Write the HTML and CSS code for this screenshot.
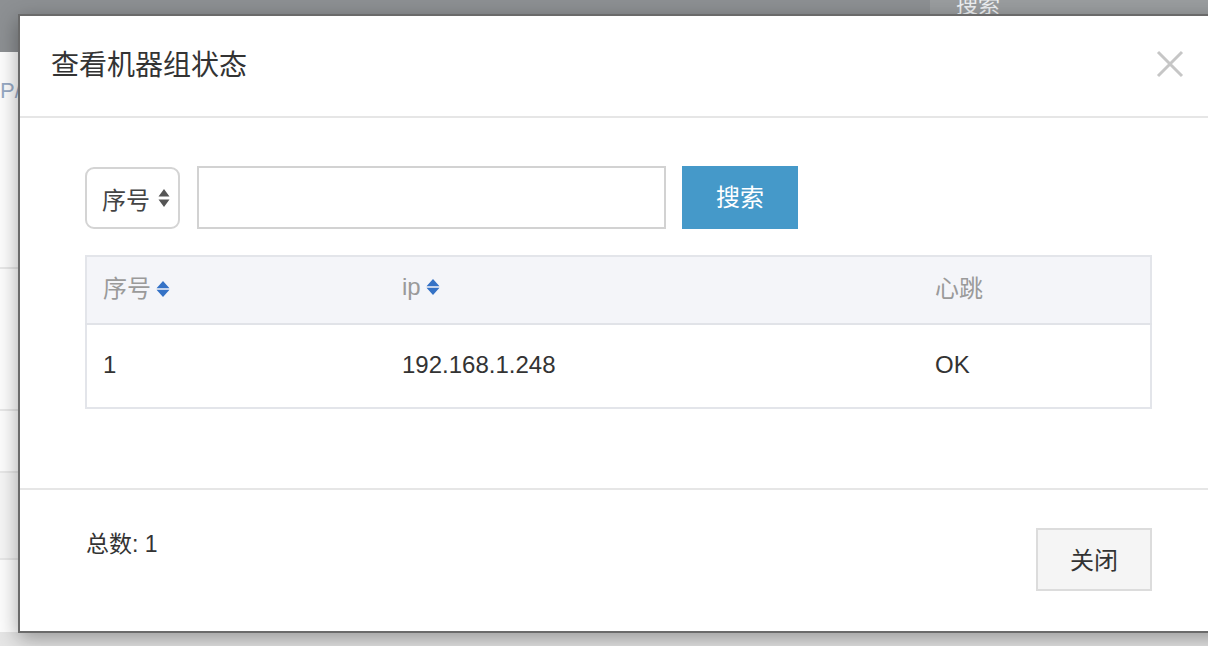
FILE: index.html
```html
<!DOCTYPE html>
<html lang="zh">
<head>
<meta charset="utf-8">
<title>查看机器组状态</title>
<link rel="stylesheet" href="styles.css">
</head>
<body>
<div class="page">
  <div class="topbar">
    <div class="topbar-search">搜索</div>
  </div>
  <div class="page-content">
    <div class="page-link">IP/</div>
    <div class="page-row r1"></div>
    <div class="page-row r2"></div>
    <div class="page-row r3"></div>
    <div class="page-row r4"></div>
  </div>
  <div class="page-bottom"></div>
</div>

<div class="modal">
  <div class="modal-header">
    <h4 class="modal-title">查看机器组状态</h4>
    <button class="modal-close" aria-label="close">
      <svg width="28" height="28" viewBox="0 0 28 28"><path d="M2 2 L26 26 M26 2 L2 26" stroke="#c6c6c6" stroke-width="3" fill="none"/></svg>
    </button>
  </div>
  <div class="modal-body">
    <div class="search-bar">
      <div class="select">
        <span>序号</span>
        <svg class="select-arrow" width="12" height="18" viewBox="0 0 12 18"><path d="M6 0 L11.5 7.5 H0.5 Z M6 18 L11.5 10.5 H0.5 Z" fill="#555"/></svg>
      </div>
      <input class="search-input" type="text">
      <button class="btn-search">搜索</button>
    </div>
    <table class="grid">
      <thead>
        <tr>
          <th class="c1">序号<svg class="sort" width="14" height="18" viewBox="0 0 14 18"><path d="M7 1 L13.5 8.2 H0.5 Z M7 17 L13.5 9.8 H0.5 Z" fill="#3572c6"/></svg></th>
          <th class="c2">ip<svg class="sort" width="14" height="18" viewBox="0 0 14 18"><path d="M7 1 L13.5 8.2 H0.5 Z M7 17 L13.5 9.8 H0.5 Z" fill="#3572c6"/></svg></th>
          <th class="c3">心跳</th>
        </tr>
      </thead>
      <tbody>
        <tr>
          <td>1</td>
          <td>192.168.1.248</td>
          <td>OK</td>
        </tr>
      </tbody>
    </table>
  </div>
  <div class="modal-footer">
    <div class="total">总数: 1</div>
    <button class="btn-close">关闭</button>
  </div>
</div>
</body>
</html>
```

FILE: styles.css
```css
* { box-sizing: border-box; }
html, body {
  margin: 0;
  padding: 0;
  width: 1208px;
  height: 646px;
  overflow: hidden;
  font-family: "Liberation Sans", "Noto Sans CJK SC", sans-serif;
  background: #fafafa;
}
.page {
  position: relative;
  width: 1208px;
  height: 646px;
  display: flex;
  flex-direction: column;
}
.topbar {
  height: 52px;
  background: #8d9093;
  display: flex;
  justify-content: flex-end;
}
.topbar-search {
  width: 278px;
  height: 52px;
  background: #9a9d9f;
  color: #eef0f2;
  font-size: 22px;
  line-height: 22px;
  padding: 0 0 0 26px;
  margin-top: -6px;
}
.page-content {
  flex: 1;
  background: #fdfdfd;
  position: relative;
}
.page-link {
  color: #97a9c4;
  font-size: 22px;
  padding: 26px 0 0 0;
  margin-left: -6px;
}
.page-row {
  position: absolute;
  left: 0;
  width: 30px;
  border-top: 2px solid #e8e8e8;
}
.r1 { top: 215px; }
.r2 { top: 357px; }
.r3 { top: 419px; height: 87px; background: #f6f6f6; }
.r4 { top: 506px; }
.page-bottom {
  height: 14px;
  background: #e6e6e6;
}

.modal {
  position: absolute;
  left: 18px;
  top: 14px;
  width: 1260px;
  height: 619px;
  background: #fff;
  border: 2px solid #6a6a6a;
  box-shadow: 0 6px 20px rgba(0, 0, 0, 0.35);
  display: flex;
  flex-direction: column;
  color: #333;
}
.modal-header {
  height: 102px;
  border-bottom: 2px solid #e6e6e6;
  display: flex;
  align-items: center;
  padding: 0 0 6px 31px;
  position: relative;
}
.modal-title {
  margin: 0;
  font-weight: normal;
  font-size: 28px;
  color: #333;
  flex: 1;
}
.modal-close {
  position: absolute;
  left: 1135px;
  top: 34px;
  width: 30px;
  height: 30px;
  padding: 0;
  border: 0;
  background: none;
}
.modal-body {
  height: 370px;
  padding: 48px 0 0 65px;
}
.search-bar {
  display: flex;
  align-items: flex-start;
  height: 63px;
}
.select {
  margin-top: 1px;
  width: 95px;
  height: 62px;
  border: 2px solid #d4d4d4;
  border-radius: 9px;
  display: flex;
  align-items: center;
  padding-left: 15px;
  font-size: 24px;
  color: #444;
}
.select-arrow { margin-left: 8px; }
.search-input {
  margin-left: 17px;
  width: 469px;
  height: 63px;
  border: 2px solid #d2d2d2;
  border-radius: 0;
  outline: none;
  background: #fff;
}
.btn-search {
  margin-left: 16px;
  width: 116px;
  height: 63px;
  border: 0;
  background: #4599c9;
  color: #fff;
  font-family: inherit;
  font-size: 24px;
  padding: 0 0 4px 0;
}
.grid {
  margin-top: 26px;
  width: 1067px;
  border-collapse: collapse;
  border: 2px solid #e3e5ea;
  font-size: 24px;
}
.grid th {
  height: 68px;
  background: #f4f5f9;
  color: #9a9a9a;
  font-weight: normal;
  text-align: left;
  border-bottom: 2px solid #e1e3e8;
  padding: 0 0 7px 16px;
}
.grid td {
  height: 84px;
  text-align: left;
  padding: 0 0 2px 16px;
  color: #333;
}
.grid .c1 { width: 300px; }
.grid .c2 { width: 533px; }
.sort { vertical-align: -1px; margin-left: 5px; }
.modal-footer {
  flex: 1;
  border-top: 2px solid #e6e6e6;
  display: flex;
  align-items: flex-start;
  padding: 0 0 0 66px;
}
.total {
  margin-top: 35px;
  font-size: 23px;
  color: #333;
  flex: 1;
  max-width: 950px;
}
.btn-close {
  margin-top: 38px;
  width: 116px;
  height: 63px;
  background: #f5f5f5;
  border: 2px solid #dcdcdc;
  font-family: inherit;
  font-size: 24px;
  color: #333;
  padding: 0 0 3px 0;
}
```
